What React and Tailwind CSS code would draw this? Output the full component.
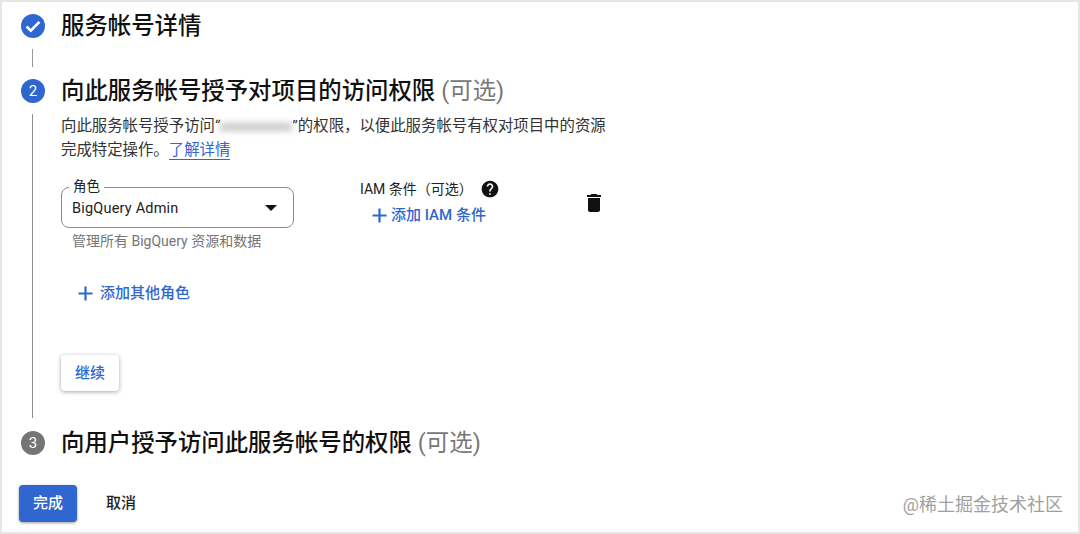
import React from "react";

const font = { fontFamily: '"Roboto", "Noto Sans CJK SC", sans-serif' };

function StepHeader({ badge, color, title, optional }) {
  return (
    <div className="flex h-6 items-center">
      <div className={`flex h-6 w-6 shrink-0 items-center justify-center rounded-full text-[15px] text-white ${color}`}>
        {badge}
      </div>
      <h2 className="ml-4 whitespace-nowrap text-[23.4px] font-medium leading-6 text-[#111]">
        {title}
        {optional && <span className="ml-1.5 font-normal text-[#777]">(可选)</span>}
      </h2>
    </div>
  );
}

function PlusIcon({ className }) {
  return (
    <svg viewBox="0 0 15 15" className={className} fill="none" stroke="#2f66d0" strokeWidth="2.2">
      <path d="M7.5 0.5v14M0.5 7.5h14" />
    </svg>
  );
}

export default function App() {
  return (
    <div style={font} className="relative h-[534px] w-[1080px] overflow-hidden border-2 border-[#e6e6e6] bg-white pl-[19px] pt-3">
      {/* step 1 */}
      <StepHeader
        color="bg-[#2f66d0]"
        title="服务帐号详情"
        badge={
          <svg viewBox="0 0 24 24" className="h-[22px] w-[22px]" fill="none" stroke="white" strokeWidth="2.8">
            <path d="M5 12.5l4.6 4.5L19 7.5" />
          </svg>
        }
      />
      <div className="ml-[11px] mt-[11px] h-[18px] w-px bg-[#9a9a9a]" />

      {/* step 2 */}
      <div className="mt-3">
        <StepHeader badge="2" color="bg-[#2f66d0]" title="向此服务帐号授予对项目的访问权限" optional />
      </div>
      <div className="ml-[11px] mt-[11px] h-[304px] border-l border-[#8f8f8f] pl-[28px]">
        <p className="w-[560px] text-[15.4px] leading-6 text-[#333]">
          向此服务帐号授予访问“
          <span className="inline-block h-2 w-[72px] bg-[#c9c9c9] align-middle blur-[3px]" />
          ”的权限，以便此服务帐号有权对项目中的资源
          <br />
          完成特定操作。
          <a className="border-b border-[#2f66d0] text-[#2f66d0]">了解详情</a>
        </p>

        <div className="mt-[25px] flex">
          <div className="w-[233px]">
            <div className="relative flex h-[41px] items-center justify-between rounded-lg border border-[#8a8a8a] pl-[10px] pr-[16px] text-[14.5px] text-[#222]">
              <span className="absolute -top-[11px] left-[7px] bg-white px-1 text-[13.5px] leading-[18px] text-[#222]">角色</span>
              <span className="pt-[2px] tracking-[0.2px]">BigQuery Admin</span>
              <svg viewBox="0 0 12 6" className="h-[6px] w-[12px]" fill="#111">
                <path d="M0 0h12L6 6z" />
              </svg>
            </div>
            <p className="ml-[11px] mt-[3px] text-[14px] leading-5 text-[#757575]">管理所有 BigQuery 资源和数据</p>
            <div className="ml-[17px] mt-[32px] flex h-5 items-center text-[15px] font-medium text-[#2f66d0]">
              <PlusIcon className="mr-[7px] h-[15px] w-[15px]" />
              添加其他角色
            </div>
          </div>

          <div className="ml-[66px] w-[200px]">
            <div className="-mt-[8px] flex h-5 items-center whitespace-nowrap text-[14px] text-[#222]">
              IAM 条件（可选）
              <svg viewBox="0 0 24 24" className="ml-[7px] h-[20px] w-[20px]" fill="#111">
                <path d="M12 2C6.48 2 2 6.48 2 12s4.48 10 10 10 10-4.48 10-10S17.52 2 12 2zm1 17h-2v-2h2v2zm2.07-7.75l-.9.92C13.45 12.9 13 13.5 13 15h-2v-.5c0-1.1.45-2.1 1.17-2.83l1.24-1.26c.37-.36.59-.86.59-1.41 0-1.1-.9-2-2-2s-2 .9-2 2H8c0-2.21 1.79-4 4-4s4 1.79 4 4c0 .88-.36 1.68-.93 2.25z" />
              </svg>
            </div>
            <div className="ml-3 mt-1.5 flex h-5 items-center whitespace-nowrap text-[15px] font-medium text-[#2f66d0]">
              <PlusIcon className="mr-1 h-[15px] w-[15px]" />
              添加 IAM 条件
            </div>
          </div>

          <svg viewBox="0 0 24 24" className="ml-[22px] mt-[4px] h-[24px] w-[24px]" fill="#111">
            <path d="M6 19c0 1.1.9 2 2 2h8c1.1 0 2-.9 2-2V7H6v12zM19 4h-3.5l-1-1h-5l-1 1H5v2h14V4z" />
          </svg>
        </div>

        <button className="mt-[52px] flex h-9 w-[58px] items-center justify-center rounded bg-white text-[15px] font-medium text-[#2f66d0] shadow-[0_1px_4px_rgba(0,0,0,0.35)]">
          继续
        </button>
      </div>

      {/* step 3 */}
      <div className="mt-[13px]">
        <StepHeader badge="3" color="bg-[#757575]" title="向用户授予访问此服务帐号的权限" optional />
      </div>

      {/* footer */}
      <div className="-ml-[2px] mt-[30px] flex items-center">
        <button className="h-[37px] w-[58px] rounded bg-[#2f66d0] text-[15px] font-medium text-white shadow-[0_1px_3px_rgba(0,0,0,0.4)]">
          完成
        </button>
        <button className="ml-[29px] text-[15px] font-medium text-[#222]">取消</button>
      </div>

      <span className="absolute bottom-[17px] right-[15px] text-[18px] leading-5 text-[#a0a0a0]">@稀土掘金技术社区</span>
    </div>
  );
}
